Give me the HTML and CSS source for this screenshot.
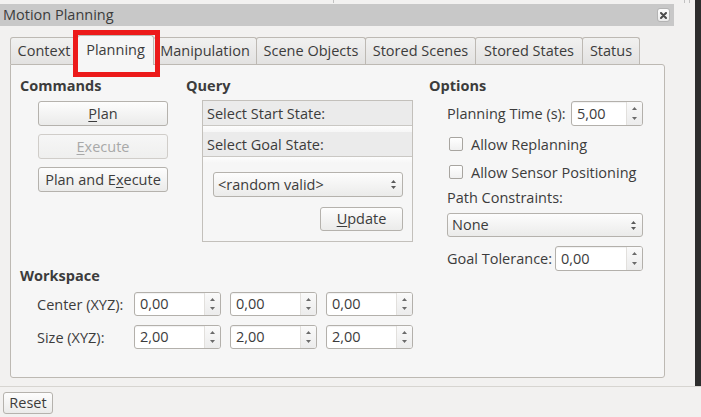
FILE: index.html
```html
<!DOCTYPE html>
<html>
<head>
<meta charset="utf-8">
<title>Motion Planning</title>
<link rel="stylesheet" href="styles.css">
</head>
<body>
<div class="screen">
  <div class="upper">
    <div class="main">
      <div class="topstrip"><span class="tick t1"></span><span class="tick t2"></span><span class="tick t3"></span></div>
      <div class="titlebar">
        <span class="title">Motion Planning</span>
        <span class="close"><svg width="7" height="7" viewBox="0 0 7 7"><path d="M1 1L6 6M6 1L1 6" stroke="#4a4a4a" stroke-width="2" stroke-linecap="round"/></svg></span>
      </div>
      <div class="tabwidget">
        <div class="tabs">
          <div class="tab w-context">Context</div>
          <div class="tab selected w-planning">Planning<span class="highlight"></span></div>
          <div class="tab w-manip">Manipulation</div>
          <div class="tab w-scene">Scene Objects</div>
          <div class="tab w-scenes">Stored Scenes</div>
          <div class="tab w-states">Stored States</div>
          <div class="tab w-status">Status</div>
        </div>
        <div class="pane">
          <div class="left">
            <div class="toprow">
              <div class="col-cmd">
                <div class="h">Commands</div>
                <div class="btn-stack">
                  <div class="btn"><span><u>P</u>lan</span></div>
                  <div class="btn disabled"><span><u>E</u>xecute</span></div>
                  <div class="btn"><span>Plan and E<u>x</u>ecute</span></div>
                </div>
              </div>
              <div class="col-query">
                <div class="h">Query</div>
                <div class="qbox">
                  <div class="qrow">Select Start State:</div>
                  <div class="qband"></div>
                  <div class="qrow">Select Goal State:</div>
                  <div class="qband"></div>
                  <div class="qbody">
                    <div class="combo random">
                      <span>&lt;random valid&gt;</span>
                      <span class="carr"><svg width="5" height="3" viewBox="0 0 5 3"><path d="M0 3L2.5 0L5 3Z" fill="#5a5a5a"/></svg><svg width="5" height="3" viewBox="0 0 5 3"><path d="M0 0L5 0L2.5 3Z" fill="#5a5a5a"/></svg></span>
                    </div>
                    <div class="btn update"><span><u>U</u>pdate</span></div>
                  </div>
                </div>
              </div>
            </div>
            <div class="workspace">
              <div class="h">Workspace</div>
              <div class="wrow first">
                <span class="wlabel">Center (XYZ):</span>
                <div class="spins">
                  <div class="spin ws"><span class="val">0,00</span><span class="arr"><svg width="5" height="3" viewBox="0 0 5 3"><path d="M0 3L2.5 0L5 3Z" fill="#6a6a6a"/></svg><svg width="5" height="3" viewBox="0 0 5 3"><path d="M0 0L5 0L2.5 3Z" fill="#6a6a6a"/></svg></span></div>
                  <div class="spin ws"><span class="val">0,00</span><span class="arr"><svg width="5" height="3" viewBox="0 0 5 3"><path d="M0 3L2.5 0L5 3Z" fill="#6a6a6a"/></svg><svg width="5" height="3" viewBox="0 0 5 3"><path d="M0 0L5 0L2.5 3Z" fill="#6a6a6a"/></svg></span></div>
                  <div class="spin ws"><span class="val">0,00</span><span class="arr"><svg width="5" height="3" viewBox="0 0 5 3"><path d="M0 3L2.5 0L5 3Z" fill="#6a6a6a"/></svg><svg width="5" height="3" viewBox="0 0 5 3"><path d="M0 0L5 0L2.5 3Z" fill="#6a6a6a"/></svg></span></div>
                </div>
              </div>
              <div class="wrow second">
                <span class="wlabel">Size (XYZ):</span>
                <div class="spins">
                  <div class="spin ws"><span class="val">2,00</span><span class="arr"><svg width="5" height="3" viewBox="0 0 5 3"><path d="M0 3L2.5 0L5 3Z" fill="#6a6a6a"/></svg><svg width="5" height="3" viewBox="0 0 5 3"><path d="M0 0L5 0L2.5 3Z" fill="#6a6a6a"/></svg></span></div>
                  <div class="spin ws"><span class="val">2,00</span><span class="arr"><svg width="5" height="3" viewBox="0 0 5 3"><path d="M0 3L2.5 0L5 3Z" fill="#6a6a6a"/></svg><svg width="5" height="3" viewBox="0 0 5 3"><path d="M0 0L5 0L2.5 3Z" fill="#6a6a6a"/></svg></span></div>
                  <div class="spin ws"><span class="val">2,00</span><span class="arr"><svg width="5" height="3" viewBox="0 0 5 3"><path d="M0 3L2.5 0L5 3Z" fill="#6a6a6a"/></svg><svg width="5" height="3" viewBox="0 0 5 3"><path d="M0 0L5 0L2.5 3Z" fill="#6a6a6a"/></svg></span></div>
                </div>
              </div>
            </div>
          </div>
          <div class="options">
            <div class="h">Options</div>
            <div class="opt-body">
              <div class="orow">
                <span>Planning Time (s):</span>
                <div class="spin pt"><span class="val">5,00</span><span class="arr"><svg width="5" height="3" viewBox="0 0 5 3"><path d="M0 3L2.5 0L5 3Z" fill="#6a6a6a"/></svg><svg width="5" height="3" viewBox="0 0 5 3"><path d="M0 0L5 0L2.5 3Z" fill="#6a6a6a"/></svg></span></div>
              </div>
              <div class="check-row first"><span class="cb"></span><span>Allow Replanning</span></div>
              <div class="check-row"><span class="cb"></span><span>Allow Sensor Positioning</span></div>
              <div class="plabel">Path Constraints:</div>
              <div class="combo none">
                <span>None</span>
                <span class="carr"><svg width="5" height="3" viewBox="0 0 5 3"><path d="M0 3L2.5 0L5 3Z" fill="#5a5a5a"/></svg><svg width="5" height="3" viewBox="0 0 5 3"><path d="M0 0L5 0L2.5 3Z" fill="#5a5a5a"/></svg></span>
              </div>
              <div class="orow goal">
                <span>Goal Tolerance:</span>
                <div class="spin gt"><span class="val">0,00</span><span class="arr"><svg width="5" height="3" viewBox="0 0 5 3"><path d="M0 3L2.5 0L5 3Z" fill="#6a6a6a"/></svg><svg width="5" height="3" viewBox="0 0 5 3"><path d="M0 0L5 0L2.5 3Z" fill="#6a6a6a"/></svg></span></div>
              </div>
            </div>
          </div>
        </div>
      </div>
    </div>
    <div class="edge"></div>
  </div>
  <div class="footer">
    <div class="btn reset"><span>Reset</span></div>
  </div>
</div>
</body>
</html>
```
FILE: styles.css
```css
body {
  margin: 0;
  width: 701px;
  height: 417px;
  overflow: hidden;
  background: #f2f1f0;
  font-family: "Open Sans", "DejaVu Sans", sans-serif;
  font-size: 14.5px;
  color: #3c3c3c;
}
u { text-decoration: underline; text-underline-offset: 2px; }
.screen { display: flex; flex-direction: column; height: 417px; }
.upper { display: flex; height: 386px; }
.main { width: 695px; }
.edge { width: 6px; background: #2d2d2d; }

.topstrip { height: 4px; display: flex; }
.tick { width: 1px; height: 3px; background: #c2c2c2; }
.t1 { margin-left: 333px; }
.t2 { margin-left: 350px; }
.t3 { margin-left: 4px; }

.titlebar {
  width: 674px; height: 22px; box-sizing: border-box;
  background: #c8c8c8;
  display: flex; align-items: center; justify-content: space-between;
  padding: 0 4px 0 3px;
}
.title { line-height: 22px; }
.close {
  width: 13px; height: 14px; box-sizing: border-box;
  border: 1px solid #b4b4b4; border-radius: 3px;
  background: linear-gradient(#fdfdfd, #ebebeb);
  display: flex; align-items: center; justify-content: center;
}

.tabwidget { margin: 9px 0 0 10px; width: 655px; }
.tabs { display: flex; align-items: flex-end; height: 29px; }
.tab {
  box-sizing: border-box; height: 27px;
  border: 1px solid #bdb9b3; border-bottom: none;
  border-radius: 3px 3px 0 0;
  background: linear-gradient(#f1f1f0, #e3e2e1);
  display: flex; align-items: center; justify-content: center;
  margin-left: -1px; line-height: 18px;
}
.tab:first-child { margin-left: 0; }
.tab.selected {
  height: 30px; margin-bottom: -1px;
  background: #f6f6f6; position: relative; z-index: 1;
  padding-bottom: 2px;
}
.w-context { width: 68px; }
.w-planning { width: 77px; }
.w-manip { width: 104px; }
.w-scene { width: 110px; }
.w-scenes { width: 111px; }
.w-states { width: 108px; }
.w-status { width: 58px; }
.highlight {
  position: absolute; left: -5px; top: -6px;
  width: 87px; height: 47px; box-sizing: border-box;
  border: 5px solid #ec1a1a;
}

.pane {
  box-sizing: border-box; height: 314px;
  border: 1px solid #bdb9b3; border-radius: 0 3px 3px 3px;
  background: #f6f6f6;
  display: flex; padding: 12px 0 0 9px;
}
.h { font-weight: bold; line-height: 18px; height: 18px; }
.left { width: 409px; }
.toprow { display: flex; }
.col-cmd { width: 166px; }
.btn-stack { display: flex; flex-direction: column; gap: 8px; margin: 6px 0 0 18px; width: 130px; }
.btn {
  box-sizing: border-box; height: 25px;
  border: 1px solid #b5b2ad; border-radius: 3px;
  background: linear-gradient(#fdfdfd, #ebebea);
  display: flex; align-items: center; justify-content: center;
  line-height: 18px;
}
.btn.disabled { color: #a8a8a8; border-color: #d0cdc9; background: linear-gradient(#f6f6f6, #efefee); }

.col-query { width: 243px; }
.qbox {
  margin: 5px 0 0 16px; width: 211px; height: 142px; box-sizing: border-box;
  border: 1px solid #c3c0bb; background: #f6f6f6;
}
.qrow {
  height: 25px; box-sizing: border-box;
  border-bottom: 1px solid #cac8c4; background: #ebebeb;
  padding-left: 4px; display: flex; align-items: center;
}
.qband { height: 6px; background: linear-gradient(#fdfdfd, #f6f6f6); }
.qbody { padding: 9px 9px 0 10px; display: flex; flex-direction: column; align-items: flex-end; gap: 10px; }
.combo {
  box-sizing: border-box; height: 25px;
  border: 1px solid #b5b2ad; border-radius: 3px;
  background: linear-gradient(#fdfdfd, #ebebea);
  display: flex; align-items: center; justify-content: space-between;
  padding: 0 6px 0 4px; line-height: 18px;
}
.combo.random { width: 190px; }
.carr { display: flex; flex-direction: column; gap: 3px; }
.btn.update { width: 83px; height: 24px; }

.workspace { margin-top: 25px; }
.wrow { display: flex; align-items: center; margin-left: 17px; height: 24px; }
.wrow.first { margin-top: 7px; }
.wrow.second { margin-top: 9px; }
.wlabel { width: 97px; }
.spins { display: flex; gap: 9px; }

.spin {
  box-sizing: border-box; height: 24px;
  border: 1px solid #b3b0ab; border-radius: 3px;
  background: #fff; display: flex;
  box-shadow: inset 0 1px 1px rgba(0,0,0,0.06);
}
.spin .val { flex: 1; padding-left: 5px; display: flex; align-items: center; line-height: 18px; }
.spin .arr {
  width: 16px; box-sizing: border-box;
  border-left: 1px solid #e2e0dd;
  background: linear-gradient(#fafafa, #ececec);
  border-radius: 0 2px 2px 0;
  display: flex; flex-direction: column; justify-content: space-between; align-items: center;
  padding: 5px 0 5px;
}
.spin.ws { width: 87px; }
.spin.pt { width: 72px; height: 25px; }
.spin.gt { width: 88px; height: 25px; }

.options { width: 214px; }
.opt-body { margin: 6px 0 0 18px; width: 196px; display: flex; flex-direction: column; }
.orow { display: flex; justify-content: space-between; align-items: center; height: 25px; }
.orow.goal { margin-top: 9px; }
.check-row { height: 28px; display: flex; align-items: center; gap: 8px; padding-left: 2px; }
.check-row.first { margin-top: 4px; }
.cb {
  width: 14px; height: 14px; box-sizing: border-box;
  border: 1px solid #a8a5a0; border-radius: 2px;
  background: linear-gradient(#ffffff, #f0f0f0);
}
.plabel { height: 24px; line-height: 24px; }
.combo.none { width: 196px; height: 24px; margin-top: 3px; }

.footer { flex: 1; border-top: 1px solid #d7d5d1; padding: 5px 0 0 3px; }
.btn.reset { width: 50px; height: 22px; }
```
